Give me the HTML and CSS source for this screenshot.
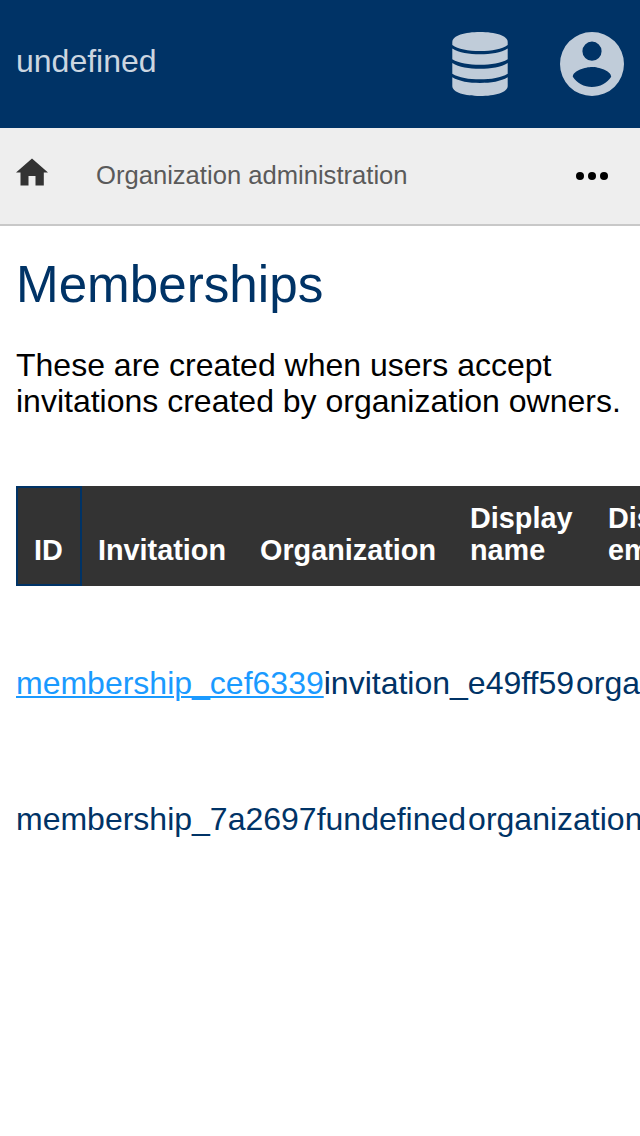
FILE: index.html
```html
<!DOCTYPE html>
<html lang="en">
<head>
<meta charset="utf-8">
<title>Memberships</title>
<link rel="stylesheet" href="styles.css">
</head>
<body>
<header class="topbar">
  <span class="brand">undefined</span>
  <nav class="topbar-icons">
    <svg width="56" height="64" viewBox="0 0 56 64" fill="currentColor">
      <path d="M.300 10C.300 3.500 13 0 28 0s27.700 3.500 27.700 10v3C50 17.200 40 19 28 19S6 17.200 .300 13z"/>
      <path d="M.300 16.500C7 20.700 17 22.200 28 22.200s21-1.500 27.700-5.700v10.800C49 31.300 39 32.800 28 32.800S7 31.300 .300 27.300z"/>
      <path d="M.300 30.900C7 35.100 17 36.700 28 36.700s21-1.600 27.700-5.800v10.800C49 45.800 39 47.300 28 47.300S7 45.800 .300 41.700z"/>
      <path d="M.300 45.200C7 49.300 17 50.900 28 50.900s21-1.600 27.700-5.700V54C55.700 60.500 43 64 28 64S.300 60.500 .300 54z"/>
    </svg>
    <svg width="64" height="64" viewBox="0 0 64 64" fill="currentColor">
      <path fill-rule="evenodd" d="M32 0a32 32 0 1 0 0 64a32 32 0 1 0 0-64zM32 9.600a9.600 9.600 0 1 1 0 19.200a9.600 9.600 0 1 1 0-19.200zM32 55.040c-8 0-15.070-4.100-19.200-10.300c.1-6.370 12.800-9.860 19.200-9.860s19.100 3.490 19.200 9.860c-4.130 6.200-11.200 10.300-19.200 10.300z"/>
    </svg>
  </nav>
</header>
<nav class="breadcrumbs">
  <svg class="home" width="32" height="28" viewBox="0 0 32 28"><path d="M16 .400 32 14.500h-4.200V27.600H19.500V18h-7v9.600H4.500V14.500H0z"/></svg>
  <span class="crumb">Organization administration</span>
  <svg class="more" width="32" height="8" viewBox="0 0 32 8"><circle cx="4" cy="4" r="4"/><circle cx="16" cy="4" r="4"/><circle cx="28" cy="4" r="4"/></svg>
</nav>
<main class="content">
  <h1 class="title">Memberships</h1>
  <p class="intro">These are created when users accept invitations created by organization owners.</p>
  <div class="table">
    <div class="thead">
      <div class="th th-id">ID</div>
      <div class="th th-invitation">Invitation</div>
      <div class="th th-organization">Organization</div>
      <div class="th th-name">Display name</div>
      <div class="th th-email">Display email</div>
    </div>
    <div class="row"><a class="link">membership_cef6339</a><span>invitation_e49ff59</span><span class="organization">organization_</span></div>
    <div class="row"><span>membership_7a2697f</span><span>undefined</span><span class="organization">organization_</span></div>
  </div>
</main>
</body>
</html>
```

FILE: styles.css
```css
* { box-sizing: border-box; }

body {
  margin: 0;
  height: 1136px;
  overflow: hidden;
  background: #fff;
  color: #000;
  font: 32px/36px "Liberation Sans", Arial, sans-serif;
}

.topbar {
  display: flex;
  justify-content: space-between;
  height: 128px;
  padding: 32px 16px;
  background: #003366;
  color: #c0ccd9;
}

.brand {
  padding-top: 11px;
  color: #ccd6e0;
}

.topbar-icons {
  display: flex;
  gap: 52px;
}

.breadcrumbs {
  display: flex;
  align-items: flex-start;
  height: 98px;
  padding: 30px 32px 0 16px;
  border-bottom: 2px solid #c8c8c8;
  background: #eee;
}

.home { fill: #333; }

.crumb {
  margin-left: 48px;
  color: #5a5a5a;
  font-size: 25.6px;
  line-height: 34px;
}

.more {
  margin: 14px 0 0 auto;
}

.content {
  padding: 30px 0 0 16px;
  overflow: hidden;
}

.title {
  margin: 0;
  color: #003366;
  font-size: 51.2px;
  font-weight: 400;
  line-height: 58px;
}

.intro {
  margin: 33px 0 67px;
  padding-right: 16px;
}

.table {
  width: 1400px;
  color: #003366;
}

.thead {
  display: flex;
  align-items: stretch;
  height: 100px;
  background: #333;
  color: #fff;
  font-size: 28.8px;
  font-weight: 700;
  line-height: 32px;
}

.th {
  display: flex;
  align-items: flex-end;
  padding: 16px 16px 20px;
}

.th-id {
  width: 66px;
  padding: 14px 16px 18px;
  border: 2px solid #003366;
}

.th-invitation { width: 162px; }
.th-organization { width: 210px; }
.th-name { width: 138px; }
.th-email { width: 140px; }

.row {
  display: flex;
  align-items: center;
  height: 36px;
  margin-top: 79px;
}

.row + .row { margin-top: 100px; }

.organization { margin-left: 2px; }

.link {
  color: #1a9aff;
  text-decoration: underline;
  text-decoration-thickness: 2px;
  text-underline-offset: 2px;
}
```
